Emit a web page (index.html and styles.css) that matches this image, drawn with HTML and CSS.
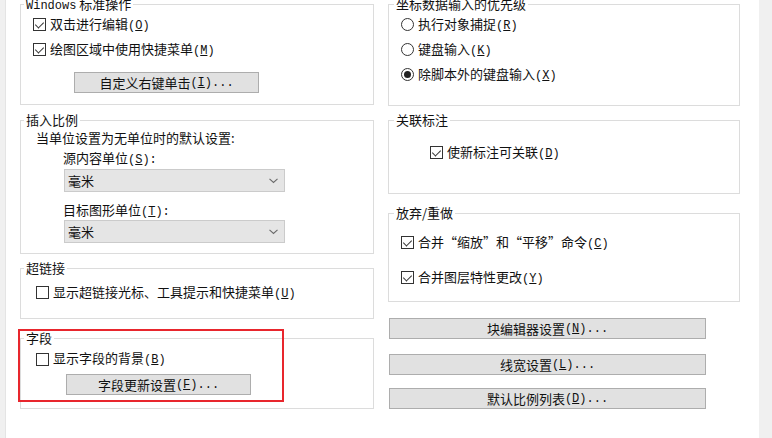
FILE: index.html
```html
<!DOCTYPE html>
<html lang="zh-CN">
<head>
<meta charset="utf-8">
<link rel="stylesheet" href="styles.css">
</head>
<body>
<div class="page">
  <div class="lstrip"></div>
  <div class="main">
    <div class="col col-left">
      <div class="group g1">
        <div class="legend"><span class="mono">Windows</span> 标准操作</div>
        <div class="row pad12"><span class="cb on"></span><span class="lbl">双击进行编辑<span class="k">(<u>O</u>)</span></span></div>
        <div class="row pad12"><span class="cb on"></span><span class="lbl">绘图区域中使用快捷菜单<span class="k">(<u>M</u>)</span></span></div>
        <div class="btn b-custom">自定义右键单击<span class="k">(<u>I</u>)...</span></div>
      </div>
      <div class="group g2">
        <div class="legend">插入比例</div>
        <div class="line l1">当单位设置为无单位时的默认设置:</div>
        <div class="line l2">源内容单位<span class="k">(<u>S</u>):</span></div>
        <div class="select s1"><span>毫米</span><svg width="9" height="6" viewBox="0 0 9 6"><polyline points="0.5,0.8 4.5,4.5 8.5,0.8" fill="none" stroke="#6a6a6a" stroke-width="1.1"/></svg></div>
        <div class="line l2 l-gap">目标图形单位<span class="k">(<u>T</u>):</span></div>
        <div class="select"><span>毫米</span><svg width="9" height="6" viewBox="0 0 9 6"><polyline points="0.5,0.8 4.5,4.5 8.5,0.8" fill="none" stroke="#6a6a6a" stroke-width="1.1"/></svg></div>
      </div>
      <div class="group g3">
        <div class="legend">超链接</div>
        <div class="row pad15 r-g3"><span class="cb"></span><span class="lbl">显示超链接光标、工具提示和快捷菜单<span class="k">(<u>U</u>)</span></span></div>
      </div>
      <div class="group g4">
        <div class="legend">字段</div>
        <div class="row pad15 r-g4"><span class="cb"></span><span class="lbl">显示字段的背景<span class="k">(<u>B</u>)</span></span></div>
        <div class="btn b-field">字段更新设置<span class="k">(<u>F</u>)...</span></div>
        <div class="redbox"></div>
      </div>
    </div>
    <div class="col col-right">
      <div class="group r1">
        <div class="legend lr">坐标数据输入的优先级</div>
        <div class="row pad12"><span class="rb"></span><span class="lbl">执行对象捕捉<span class="k">(<u>R</u>)</span></span></div>
        <div class="row pad12"><span class="rb"></span><span class="lbl">键盘输入<span class="k">(<u>K</u>)</span></span></div>
        <div class="row pad12"><span class="rb on"></span><span class="lbl">除脚本外的键盘输入<span class="k">(<u>X</u>)</span></span></div>
      </div>
      <div class="group r2">
        <div class="legend lr">关联标注</div>
        <div class="row pad41 r-r2"><span class="cb on"></span><span class="lbl">使新标注可关联<span class="k">(<u>D</u>)</span></span></div>
      </div>
      <div class="group r3">
        <div class="legend lr">放弃/重做</div>
        <div class="row pad12 r-r3a"><span class="cb on"></span><span class="lbl">合并“缩放”和“平移”命令<span class="k">(<u>C</u>)</span></span></div>
        <div class="row pad12 r-r3b"><span class="cb on"></span><span class="lbl">合并图层特性更改<span class="k">(<u>Y</u>)</span></span></div>
      </div>
      <div class="btn wide w1">块编辑器设置<span class="k">(<u>N</u>)...</span></div>
      <div class="btn wide w2">线宽设置<span class="k">(<u>L</u>)...</span></div>
      <div class="btn wide w3">默认比例列表<span class="k">(<u>D</u>)...</span></div>
    </div>
  </div>
  <div class="rstrip"></div>
</div>
</body>
</html>
```
FILE: styles.css
```css
* { box-sizing: border-box; }
html, body { margin: 0; padding: 0; background: #fff; }
body {
  font-family: "Noto Sans CJK SC", "Noto Sans", sans-serif;
  font-size: 13px;
  color: #111;
}
.page { display: flex; width: 772px; height: 438px; overflow: hidden; }
.lstrip { width: 6px; background: #f0f0f0; border-right: 1px solid #e4e4e4; }
.rstrip { width: 13px; background: #f0f0f0; }
.main { width: 753px; display: flex; padding: 4px 0 0 14px; gap: 14px; }
.col { display: flex; flex-direction: column; }
.col-left { width: 354px; }
.col-right { width: 352px; }

.group { border: 1px solid #dcdcdc; position: relative; }
.g1 { height: 101px; }
.g2 { height: 134px; margin-top: 15px; }
.g3 { height: 51px; margin-top: 14px; }
.g4 { height: 71px; margin-top: 19px; }
.r1 { height: 102px; }
.r2 { height: 74px; margin-top: 14px; }
.r3 { height: 89px; margin-top: 19px; }

.legend {
  display: block; width: max-content;
  margin: -9px 0 0 3px; padding: 0 2px;
  height: 16px; line-height: 16px;
  background: #fff; white-space: nowrap;
}
.legend.lr { margin-left: 5px; }
.mono { font-family: "Liberation Mono", monospace; font-size: 12px; }
.k { font-family: "Liberation Mono", monospace; font-size: 12px; }
.k u { text-decoration-thickness: 1px; text-underline-offset: 1px; }

.row { display: flex; align-items: center; height: 25px; white-space: nowrap; }
.g1 .row:first-of-type, .r1 .row:first-of-type { margin-top: 2px; }
.pad12 { padding-left: 12px; }
.pad15 { padding-left: 15px; }
.pad41 { padding-left: 41px; }
.r-g3 { margin-top: 4px; }
.r-g4 { margin-top: 1px; height: 24px; }
.r-r2 { margin-top: 12px; }
.r-r3a { margin-top: 9px; }
.r-r3b { margin-top: 10px; }
.lbl { margin-left: 4px; line-height: 16px; }

.cb {
  width: 13px; height: 13px; flex: none;
  border: 1px solid #333; background: #fff; position: relative;
}
.cb.on::after {
  content: ""; position: absolute; left: 3px; top: 1px;
  width: 4px; height: 7px;
  border-right: 1.2px solid #333; border-bottom: 1.2px solid #333;
  transform: rotate(45deg);
}
.rb {
  width: 13px; height: 13px; flex: none; border-radius: 50%;
  border: 1px solid #333; background: #fff;
  display: flex; align-items: center; justify-content: center;
}
.rb.on::after {
  content: ""; width: 7px; height: 7px; border-radius: 50%; background: #222;
}

.line { height: 20px; line-height: 20px; white-space: nowrap; }
.l1 { padding-left: 15px; }
.l2 { padding-left: 42px; }
.l-gap { margin-top: 8px; }
.select {
  margin-left: 43px; width: 221px; height: 23px;
  background: #e5e5e5; border: 1px solid #cbcbcb;
  display: flex; align-items: center; justify-content: space-between;
  padding: 0 6px 0 3px;
}
.s1 { margin-top: 1px; }

.btn {
  height: 21px; background: #e1e1e1; border: 1px solid #adadad;
  display: flex; align-items: center; justify-content: center;
  white-space: nowrap; line-height: 16px;
}
.b-custom { width: 185px; margin: 10px 0 0 53px; }
.b-field { width: 185px; margin: 3px 0 0 45px; }
.wide { width: 317px; margin-left: 1px; }
.w1 { margin-top: 16px; }
.w2 { margin-top: 15px; }
.w3 { margin-top: 13px; }

.redbox {
  position: absolute; left: -3px; top: -10px;
  width: 266px; height: 73px;
  border: 2px solid #e8262d;
  pointer-events: none;
}
```
